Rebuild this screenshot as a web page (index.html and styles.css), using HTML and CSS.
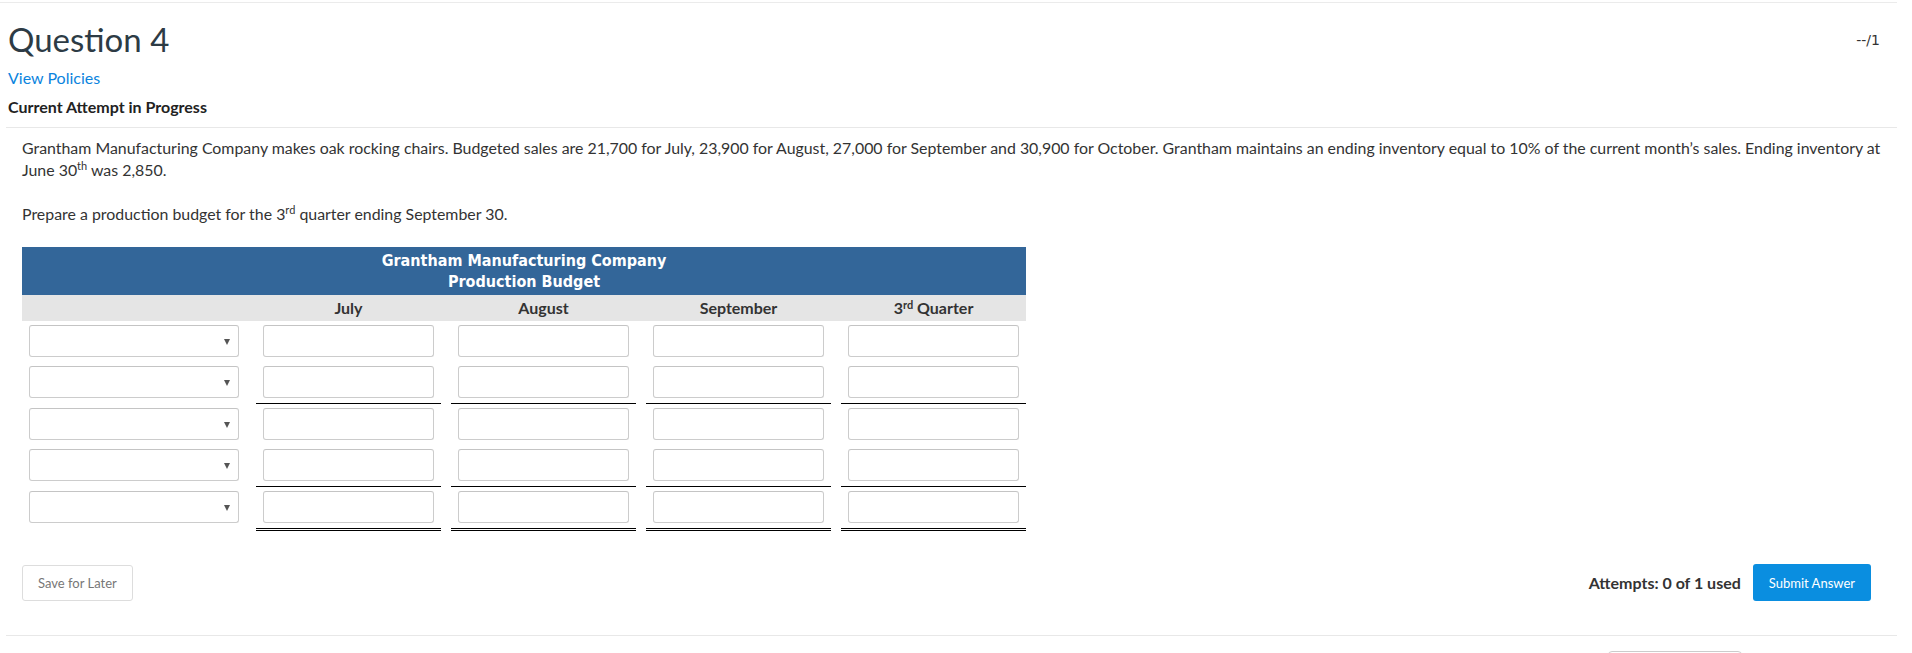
FILE: index.html
```html
<!DOCTYPE html>
<html lang="en">

<head>
    <meta charset="UTF-8">
    <meta name="viewport" content="width=device-width, initial-scale=1.0">
    <title>Question 4</title>
    <link rel="stylesheet" href="styles.css">
</head>

<body>

    <div class="page">
        <div class="question-head">
            <h1>Question 4</h1>
            <span class="score">--/1</span>
        </div>
        <a class="policies" href="#">View Policies</a>
        <div class="attempt-status">Current Attempt in Progress</div>

        <div class="question-body">
            <p>Grantham Manufacturing Company makes oak rocking chairs. Budgeted sales are 21,700 for July, 23,900 for August, 27,000 for September and 30,900 for October. Grantham maintains an ending inventory equal to 10% of the current month’s sales. Ending inventory at June 30<sup>th</sup> was 2,850.</p>
            <p>Prepare a production budget for the 3<sup>rd</sup> quarter ending September 30.</p>

            <div class="budget">
                <div class="budget-title">Grantham Manufacturing Company<br>Production Budget</div>
                <div class="budget-row budget-cols">
                    <div></div>
                    <div>July</div>
                    <div>August</div>
                    <div>September</div>
                    <div>3<sup>rd</sup> Quarter</div>
                </div>

                <div class="budget-row">
                    <div class="label-cell"><div class="select"><span class="caret"></span></div></div>
                    <div class="value-cell"><input type="text"></div>
                    <div class="value-cell"><input type="text"></div>
                    <div class="value-cell"><input type="text"></div>
                    <div class="value-cell"><input type="text"></div>
                </div>
                <div class="budget-row subtotal">
                    <div class="label-cell"><div class="select"><span class="caret"></span></div></div>
                    <div class="value-cell"><input type="text"></div>
                    <div class="value-cell"><input type="text"></div>
                    <div class="value-cell"><input type="text"></div>
                    <div class="value-cell"><input type="text"></div>
                </div>
                <div class="budget-row">
                    <div class="label-cell"><div class="select"><span class="caret"></span></div></div>
                    <div class="value-cell"><input type="text"></div>
                    <div class="value-cell"><input type="text"></div>
                    <div class="value-cell"><input type="text"></div>
                    <div class="value-cell"><input type="text"></div>
                </div>
                <div class="budget-row subtotal">
                    <div class="label-cell"><div class="select"><span class="caret"></span></div></div>
                    <div class="value-cell"><input type="text"></div>
                    <div class="value-cell"><input type="text"></div>
                    <div class="value-cell"><input type="text"></div>
                    <div class="value-cell"><input type="text"></div>
                </div>
                <div class="budget-row total">
                    <div class="label-cell"><div class="select"><span class="caret"></span></div></div>
                    <div class="value-cell"><input type="text"></div>
                    <div class="value-cell"><input type="text"></div>
                    <div class="value-cell"><input type="text"></div>
                    <div class="value-cell"><input type="text"></div>
                </div>
            </div>

            <div class="question-foot">
                <button class="btn-save">Save for Later</button>
                <div class="submit-group">
                    <span class="attempts">Attempts: 0 of 1 used</span>
                    <button class="btn-submit">Submit Answer</button>
                </div>
            </div>
        </div>

        <div class="next-row">
            <span class="next-btn"></span>
        </div>
    </div>

</body>

</html>
```

FILE: styles.css
```css
body {
    margin: 0;
    background-color: #ffffff;
    font-family: 'Lato', 'Open Sans', sans-serif;
    color: #333;
}

.page {
    width: 1897px;
    margin-top: 2px;
    border-top: 1px solid #ebebeb;
}

.question-head {
    display: flex;
    justify-content: space-between;
    align-items: flex-start;
    padding: 0 17px 0 8px;
}

h1 {
    margin: 16px 0 0;
    font-size: 33px;
    line-height: 40px;
    font-weight: 400;
    color: #2d3b45;
}

.score {
    margin-top: 29px;
    font-family: 'DejaVu Sans', sans-serif;
    font-size: 14px;
    line-height: 17px;
    color: #333;
}

.policies {
    display: block;
    margin: 8px 0 0 8px;
    font-size: 16px;
    line-height: 22px;
    color: #0b84de;
    text-decoration: none;
}

.attempt-status {
    margin: 7px 0 0 8px;
    font-size: 16px;
    line-height: 22px;
    font-weight: 700;
    color: #222;
}

.question-body {
    margin: 9px 0 0 6px;
    border-top: 1px solid #e8e8e8;
    padding: 9px 26px 0 16px;
}

p {
    margin: 0 -24px 22px 0;
    font-size: 15.9px;
    line-height: 22px;
    color: #333;
}

sup {
    font-size: 11px;
    line-height: 0;
    vertical-align: 6px;
}

/* Production budget table */
.budget {
    width: 1004px;
}

.budget-title {
    padding: 3px 0;
    background-color: #336699;
    color: #ffffff;
    text-align: center;
    font-family: 'DejaVu Sans Condensed', 'DejaVu Sans', sans-serif;
    font-weight: 700;
    font-size: 16px;
    line-height: 21px;
}

.budget-row {
    display: grid;
    grid-template-columns: 224px repeat(4, 185px);
    column-gap: 10px;
}

.budget-cols {
    background-color: #e5e5e5;
    font-size: 16px;
    line-height: 26px;
    font-weight: 700;
    color: #333;
    text-align: center;
}

.budget-cols sup {
    vertical-align: 5px;
}

.label-cell,
.value-cell {
    padding: 4px 0 5px;
}

.subtotal .value-cell {
    border-bottom: 1px solid #000;
}

.total .value-cell {
    border-bottom: 3px double #000;
}

.select {
    position: relative;
    width: 210px;
    height: 32px;
    margin-left: 7px;
    box-sizing: border-box;
    border: 1px solid #ccc;
    border-top-color: #c4c4c4;
    border-radius: 3px;
    background-color: #fff;
}

.caret {
    position: absolute;
    right: 8px;
    top: 13px;
    border-left: 3px solid transparent;
    border-right: 3px solid transparent;
    border-top: 6px solid #555;
}

.value-cell input {
    display: block;
    width: 171px;
    height: 32px;
    margin: 0 7px;
    box-sizing: border-box;
    border: 1px solid #ccc;
    border-top-color: #c4c4c4;
    border-radius: 3px;
    padding: 0 6px;
    font-family: inherit;
    font-size: 14px;
}

/* Footer with buttons */
.question-foot {
    display: flex;
    justify-content: space-between;
    align-items: center;
    margin-top: 33px;
}

.btn-save {
    height: 36px;
    padding: 0 15px;
    border: 1px solid #ddd;
    border-radius: 3px;
    background-color: #fff;
    color: #777;
    font-family: inherit;
    font-size: 13px;
}

.submit-group {
    display: flex;
    align-items: center;
    gap: 12px;
}

.attempts {
    font-size: 16px;
    font-weight: 700;
    color: #333;
}

.btn-submit {
    height: 37px;
    padding: 0 16px;
    border: none;
    border-radius: 3px;
    background-color: #0a8ee0;
    color: #fff;
    font-family: inherit;
    font-size: 13px;
}

.next-row {
    margin: 34px 0 0 6px;
    border-top: 1px solid #e8e8e8;
    padding: 15px 0 0 1602px;
}

.next-btn {
    display: block;
    width: 134px;
    height: 40px;
    box-sizing: border-box;
    border: 1px solid #ccc;
    border-radius: 4px;
}
```
